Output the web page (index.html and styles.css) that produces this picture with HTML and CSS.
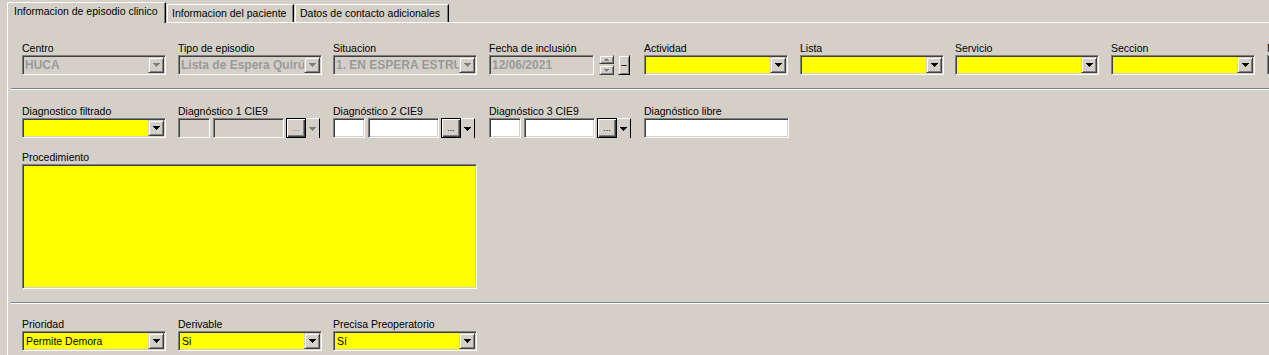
FILE: index.html
```html
<!DOCTYPE html>
<html lang="es">
<head>
    <meta charset="UTF-8">
    <title>Informacion de episodio clinico</title>
    <link rel="stylesheet" href="styles.css">
</head>
<body>
    <div class="tabs">
        <div class="tab active">Informacion de episodio clinico</div>
        <div class="tab tab-2">Informacion del paciente</div>
        <div class="tab tab-3">Datos de contacto adicionales</div>
    </div>

    <div class="panel">
        <!-- Fila 1 -->
        <div class="row row-top">
            <div class="field">
                <div class="lbl">Centro</div>
                <div class="combo off"><span class="val">HUCA</span><span class="dd"><svg class="arr" width="7" height="4"><path d="M0 0h7v1h-7zM1 1h5v1h-5zM2 2h3v1h-3zM3 3h1v1h-1z"/></svg></span></div>
            </div>
            <div class="field">
                <div class="lbl">Tipo de episodio</div>
                <div class="combo off"><span class="val">Lista de Espera Quirúrgica</span><span class="dd"><svg class="arr" width="7" height="4"><path d="M0 0h7v1h-7zM1 1h5v1h-5zM2 2h3v1h-3zM3 3h1v1h-1z"/></svg></span></div>
            </div>
            <div class="field">
                <div class="lbl">Situacion</div>
                <div class="combo off"><span class="val">1. EN ESPERA ESTRUCTURAL</span><span class="dd"><svg class="arr" width="7" height="4"><path d="M0 0h7v1h-7zM1 1h5v1h-5zM2 2h3v1h-3zM3 3h1v1h-1z"/></svg></span></div>
            </div>
            <div class="field">
                <div class="lbl">Fecha de inclusión</div>
                <div class="date-line">
                    <div class="edit off date"><span class="val">12/06/2021</span></div>
                    <div class="spin">
                        <span class="btn spin-up"><svg width="5" height="3"><path d="M2 0h1v1h-1zM1 1h3v1h-3zM0 2h5v1h-5z"/></svg></span>
                        <span class="btn spin-down"><svg width="5" height="3"><path d="M0 0h5v1h-5zM1 1h3v1h-3zM2 2h1v1h-1z"/></svg></span>
                    </div>
                    <span class="btn clear">–</span>
                </div>
            </div>
            <div class="field">
                <div class="lbl">Actividad</div>
                <div class="combo yellow"><span class="val"></span><span class="dd"><svg class="arr" width="7" height="4"><path d="M0 0h7v1h-7zM1 1h5v1h-5zM2 2h3v1h-3zM3 3h1v1h-1z"/></svg></span></div>
            </div>
            <div class="field">
                <div class="lbl">Lista</div>
                <div class="combo yellow"><span class="val"></span><span class="dd"><svg class="arr" width="7" height="4"><path d="M0 0h7v1h-7zM1 1h5v1h-5zM2 2h3v1h-3zM3 3h1v1h-1z"/></svg></span></div>
            </div>
            <div class="field">
                <div class="lbl">Servicio</div>
                <div class="combo yellow"><span class="val"></span><span class="dd"><svg class="arr" width="7" height="4"><path d="M0 0h7v1h-7zM1 1h5v1h-5zM2 2h3v1h-3zM3 3h1v1h-1z"/></svg></span></div>
            </div>
            <div class="field">
                <div class="lbl">Seccion</div>
                <div class="combo yellow"><span class="val"></span><span class="dd"><svg class="arr" width="7" height="4"><path d="M0 0h7v1h-7zM1 1h5v1h-5zM2 2h3v1h-3zM3 3h1v1h-1z"/></svg></span></div>
            </div>
            <div class="field">
                <div class="lbl">Nivel</div>
                <div class="combo yellow"><span class="val"></span><span class="dd"><svg class="arr" width="7" height="4"><path d="M0 0h7v1h-7zM1 1h5v1h-5zM2 2h3v1h-3zM3 3h1v1h-1z"/></svg></span></div>
            </div>
        </div>

        <div class="divider"></div>

        <!-- Fila 2 -->
        <div class="row row-diag">
            <div class="field">
                <div class="lbl">Diagnostico filtrado</div>
                <div class="combo yellow"><span class="val"></span><span class="dd"><svg class="arr" width="7" height="4"><path d="M0 0h7v1h-7zM1 1h5v1h-5zM2 2h3v1h-3zM3 3h1v1h-1z"/></svg></span></div>
            </div>
            <div class="field">
                <div class="lbl">Diagnóstico 1 CIE9</div>
                <div class="cie off">
                    <span class="edit e-small"></span>
                    <span class="edit e-mid"></span>
                    <span class="dots">...</span>
                    <span class="drop"><svg class="arr" width="7" height="4"><path d="M0 0h7v1h-7zM1 1h5v1h-5zM2 2h3v1h-3zM3 3h1v1h-1z"/></svg></span>
                </div>
            </div>
            <div class="field">
                <div class="lbl">Diagnóstico 2 CIE9</div>
                <div class="cie">
                    <span class="edit e-small"></span>
                    <span class="edit e-mid"></span>
                    <span class="dots">...</span>
                    <span class="drop"><svg class="arr" width="7" height="4"><path d="M0 0h7v1h-7zM1 1h5v1h-5zM2 2h3v1h-3zM3 3h1v1h-1z"/></svg></span>
                </div>
            </div>
            <div class="field">
                <div class="lbl">Diagnóstico 3 CIE9</div>
                <div class="cie">
                    <span class="edit e-small"></span>
                    <span class="edit e-mid"></span>
                    <span class="dots">...</span>
                    <span class="drop"><svg class="arr" width="7" height="4"><path d="M0 0h7v1h-7zM1 1h5v1h-5zM2 2h3v1h-3zM3 3h1v1h-1z"/></svg></span>
                </div>
            </div>
            <div class="field">
                <div class="lbl">Diagnóstico libre</div>
                <div class="edit libre"></div>
            </div>
        </div>

        <div class="proc">
            <div class="lbl">Procedimiento</div>
            <div class="memo"></div>
        </div>

        <div class="divider"></div>

        <!-- Fila 3 -->
        <div class="row row-bottom">
            <div class="field">
                <div class="lbl">Prioridad</div>
                <div class="combo yellow"><span class="val">Permite Demora</span><span class="dd"><svg class="arr" width="7" height="4"><path d="M0 0h7v1h-7zM1 1h5v1h-5zM2 2h3v1h-3zM3 3h1v1h-1z"/></svg></span></div>
            </div>
            <div class="field">
                <div class="lbl">Derivable</div>
                <div class="combo yellow"><span class="val">Si</span><span class="dd"><svg class="arr" width="7" height="4"><path d="M0 0h7v1h-7zM1 1h5v1h-5zM2 2h3v1h-3zM3 3h1v1h-1z"/></svg></span></div>
            </div>
            <div class="field">
                <div class="lbl">Precisa Preoperatorio</div>
                <div class="combo yellow"><span class="val">Sí</span><span class="dd"><svg class="arr" width="7" height="4"><path d="M0 0h7v1h-7zM1 1h5v1h-5zM2 2h3v1h-3zM3 3h1v1h-1z"/></svg></span></div>
            </div>
        </div>
    </div>
</body>
</html>
```

FILE: styles.css
```css
* {
    box-sizing: border-box;
}
body {
    margin: 0;
    background-color: #d4d0c8;
    font-family: "Liberation Sans", Arial, sans-serif;
    font-size: 10.5px;
    color: #000;
    overflow: hidden;
    width: 1269px;
    height: 355px;
}

/* Tabs */
.tabs {
    display: flex;
    align-items: flex-end;
    height: 22px;
    padding-left: 7px;
}
.tab {
    height: 18px;
    padding: 2px 0 0 4px;
    line-height: 13px;
    white-space: nowrap;
    border-left: 1px solid #fff;
    border-top: 1px solid #fff;
    border-right: 1px solid #000;
    border-top-left-radius: 2px;
    box-shadow: inset -1px 0 #808080;
    background-color: #d4d0c8;
}
.tab.active {
    width: 159px;
    height: 21px;
    margin-bottom: -1px;
    padding-left: 6px;
    position: relative;
    z-index: 1;
}
.tab-2 {
    width: 127px;
    margin-left: 1px;
}
.tab-3 {
    width: 154px;
    margin-left: 1px;
}

/* Panel */
.panel {
    margin-left: 7px;
    border-left: 1px solid #fff;
    border-top: 1px solid #fff;
    height: 400px;
}
.row {
    display: grid;
    grid-template-columns: 156px 155px 156px 155px 156px 155px 156px 156px 144px;
    padding-left: 14px;
}
.row-top {
    padding-top: 19px;
}
.row-diag {
    padding-top: 15px;
}
.row-bottom {
    padding-top: 14px;
}
.field {
    width: 144px;
}
.lbl {
    height: 13px;
    line-height: 13px;
    white-space: nowrap;
}
.divider {
    margin: 13px 0 0 3px;
    height: 2px;
    border-top: 1px solid #808080;
    border-bottom: 1px solid #fff;
}

/* Sunken controls */
.combo, .edit, .memo {
    border: 1px solid;
    border-color: #808080 #fff #fff #808080;
    box-shadow: inset 1px 1px #404040, inset -1px -1px #d4d0c8;
    background-color: #fff;
}
.combo {
    display: flex;
    width: 144px;
    height: 20px;
    padding: 1px;
}
.combo .val, .edit .val {
    flex: 1;
    min-width: 0;
    overflow: hidden;
    white-space: nowrap;
    line-height: 16px;
    padding-left: 2px;
}
.yellow {
    background-color: #ffff00;
}
.off {
    background-color: #d4d0c8;
}
.off .val {
    font-size: 12px;
    font-weight: bold;
    color: #9a9a9a;
    padding-left: 1px;
}
.dd, .btn {
    display: flex;
    align-items: center;
    justify-content: center;
    background-color: #d4d0c8;
    border: 1px solid;
    border-color: #d4d0c8 #404040 #404040 #d4d0c8;
    box-shadow: inset 1px 1px #fff, inset -1px -1px #808080;
}
.dd {
    width: 16px;
    height: 16px;
    flex: none;
}
.arr {
    display: block;
    fill: #000;
}
.off .arr {
    fill: #808080;
}

/* Fecha */
.date-line {
    display: flex;
    height: 20px;
}
.date {
    display: flex;
    width: 105px;
    height: 20px;
    padding: 1px;
}
.spin {
    display: flex;
    flex-direction: column;
    justify-content: space-between;
    width: 15px;
    margin-left: 5px;
}
.spin .btn {
    height: 9px;
}
.spin .btn:last-child {
    height: 10px;
}
.spin svg {
    fill: #808080;
}
.clear {
    width: 12px;
    margin-left: 4px;
    font-size: 10px;
    line-height: 1;
    padding-bottom: 1px;
    border-color: #d4d0c8 #000 #000 #d4d0c8;
}

/* CIE9 */
.cie {
    display: flex;
    height: 20px;
}
.e-small {
    width: 32px;
}
.e-mid {
    width: 71px;
    margin-left: 3px;
}
.off .edit {
    background-color: #d4d0c8;
}
.dots {
    width: 20px;
    margin-left: 2px;
    border: 1px solid #000;
    box-shadow: inset 1px 1px #fff, inset -1px -1px #404040, inset -2px -2px #808080;
    font-size: 9px;
    line-height: 13px;
    padding-top: 3px;
    text-align: center;
    color: #000;
}
.off .dots {
    color: #808080;
}
.drop {
    display: flex;
    align-items: center;
    justify-content: center;
    width: 14px;
    border-top: 1px solid #fff;
    border-right: 1px solid #000;
}
.libre {
    width: 145px;
    height: 20px;
}

/* Procedimiento */
.proc {
    padding: 13px 0 0 14px;
}
.memo {
    width: 455px;
    height: 125px;
    background-color: #ffff00;
}
```
